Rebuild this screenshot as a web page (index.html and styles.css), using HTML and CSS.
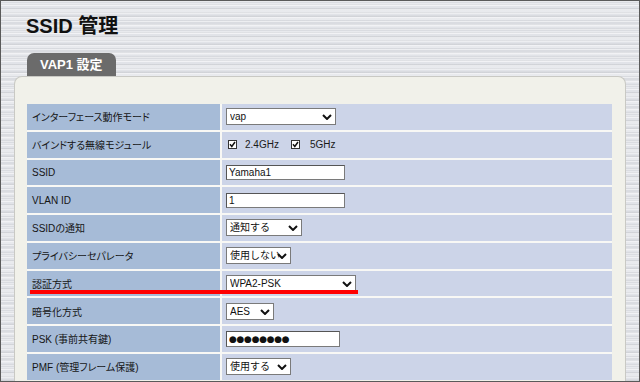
FILE: index.html
```html
<!DOCTYPE html>
<html>
	<head>
		<meta charset="utf-8">
		<link rel="stylesheet" href="styles.css">
	</head>
	<body>
		<div class="screen">
			<h1 class="page-title">SSID 管理</h1>
			<div class="tab">VAP1 設定</div>

			<section class="panel">
				<div class="settings">
					<div class="label">インターフェース動作モード</div>
					<div class="value">
						<span class="select w110"><select><option>vap</option></select><svg class="chev" width="10" height="6" viewBox="0 0 10 6"><path d="M1 1l4 4 4-4" fill="none" stroke="#111" stroke-width="2"/></svg></span>
					</div>

					<div class="label">バインドする無線モジュール</div>
					<div class="value">
						<span class="check"><svg width="9" height="9" viewBox="0 0 9 9"><rect x="0.5" y="0.5" width="8" height="8" fill="#fff" stroke="#333"/><path d="M2 4.3l1.8 2.2L7 2" fill="none" stroke="#111" stroke-width="1.5"/></svg>2.4GHz</span>
						<span class="check"><svg width="9" height="9" viewBox="0 0 9 9"><rect x="0.5" y="0.5" width="8" height="8" fill="#fff" stroke="#333"/><path d="M2 4.3l1.8 2.2L7 2" fill="none" stroke="#111" stroke-width="1.5"/></svg>5GHz</span>
					</div>

					<div class="label">SSID</div>
					<div class="value"><input class="text w119" type="text" value="Yamaha1"></div>

					<div class="label">VLAN ID</div>
					<div class="value"><input class="text w119" type="text" value="1"></div>

					<div class="label">SSIDの通知</div>
					<div class="value">
						<span class="select w76"><select><option>通知する</option></select><svg class="chev" width="10" height="6" viewBox="0 0 10 6"><path d="M1 1l4 4 4-4" fill="none" stroke="#111" stroke-width="2"/></svg></span>
					</div>

					<div class="label">プライバシーセパレータ</div>
					<div class="value">
						<span class="select w65"><select><option>使用しない</option></select><svg class="chev" width="10" height="6" viewBox="0 0 10 6"><path d="M1 1l4 4 4-4" fill="none" stroke="#111" stroke-width="2"/></svg></span>
					</div>

					<div class="label">認証方式</div>
					<div class="value">
						<span class="select w130"><select><option>WPA2-PSK</option></select><svg class="chev" width="10" height="6" viewBox="0 0 10 6"><path d="M1 1l4 4 4-4" fill="none" stroke="#111" stroke-width="2"/></svg></span>
					</div>

					<div class="label">暗号化方式</div>
					<div class="value">
						<span class="select w48"><select><option>AES</option></select><svg class="chev" width="10" height="6" viewBox="0 0 10 6"><path d="M1 1l4 4 4-4" fill="none" stroke="#111" stroke-width="2"/></svg></span>
					</div>

					<div class="label">PSK (事前共有鍵)</div>
					<div class="value"><input class="text secret w114" type="text" value="●●●●●●●●"></div>

					<div class="label">PMF (管理フレーム保護)</div>
					<div class="value">
						<span class="select w65"><select><option>使用する</option></select><svg class="chev" width="10" height="6" viewBox="0 0 10 6"><path d="M1 1l4 4 4-4" fill="none" stroke="#111" stroke-width="2"/></svg></span>
					</div>
				</div>

				<!-- annotation under 認証方式 -->
				<div class="mark"></div>
			</section>
		</div>
	</body>
</html>
```

FILE: styles.css
```css
html, body {
	margin: 0;
	padding: 0;
}

.screen {
	width: 640px;
	height: 382px;
	box-sizing: border-box;
	border: 1px solid #5a5a5a;
	overflow: hidden;
	font-family: "Liberation Sans", "Noto Sans CJK JP", sans-serif;
	color: #1a1a1a;
	background-color: #e1e3e8;
	background-image:
		repeating-linear-gradient(180deg, rgba(255,255,255,0.4) 0 1px, rgba(0,0,0,0) 1px 3px, rgba(0,0,0,0.04) 3px 4px),
		repeating-linear-gradient(180deg, rgba(0,0,0,0.03) 0 2px, rgba(255,255,255,0.25) 2px 5px, rgba(0,0,0,0) 5px 7px);
}

.page-title {
	margin: 13px 0 0 25px;
	font-size: 20px;
	line-height: 24px;
	font-weight: bold;
	color: #111;
}

.tab {
	display: inline-block;
	margin: 15px 0 0 26px;
	padding: 1px 13px 0 13px;
	width: 63px;
	height: 22px;
	line-height: 22px;
	font-size: 13px;
	font-weight: bold;
	color: #fff;
	background: #6b6b6b;
	border-radius: 7px 7px 0 0;
	vertical-align: top;
}

.panel {
	position: relative;
	margin-left: 13px;
	width: 612px;
	box-sizing: border-box;
	height: 320px;
	padding: 27px 13px 0 12px;
	background: #f1f1ea;
	border: 1px solid #c9c9c4;
	border-bottom: none;
	border-radius: 8px 8px 0 0;
}

/* two column setting table */
.settings {
	display: grid;
	grid-template-columns: 193px 1fr;
	grid-auto-rows: 25.75px;
	gap: 2px;
	background: #f8f8f5;
	font-size: 10px;
}

.label {
	display: flex;
	align-items: center;
	padding-left: 5px;
	background: #a6bbd7;
	font-feature-settings: "palt";
	color: #151515;
}

.value {
	display: flex;
	align-items: center;
	padding-left: 4px;
	background: #ccd4e8;
}

/* controls */
.select {
	position: relative;
	display: inline-block;
	height: 17px;
}
.select select {
	-webkit-appearance: none;
	        appearance: none;
	width: 100%;
	height: 17px;
	margin: 0;
	padding: 0 0 0 3px;
	border: 1px solid #7a7a7a;
	border-radius: 0;
	background: #fff;
	font-family: "Liberation Sans", "Noto Sans CJK JP", sans-serif;
	font-size: 10px;
	color: #111;
}
.select .chev {
	position: absolute;
	right: 4px;
	top: 6px;
	pointer-events: none;
}

.w48  { width: 48px; }
.w65  { width: 65px; }
.w76  { width: 76px; }
.w110 { width: 110px; }
.w114 { width: 114px; }
.w119 { width: 119px; }
.w130 { width: 130px; }

.text {
	box-sizing: border-box;
	height: 15px;
	margin: 0;
	padding: 0 2px;
	border: 1px solid #7a7a7a;
	border-top-color: #555;
	border-left-color: #555;
	border-radius: 0;
	background: #fff;
	font-family: "Liberation Sans", sans-serif;
	font-size: 10px;
	color: #111;
}
.text.secret {
	height: 16px;
	font-family: "DejaVu Sans", sans-serif;
	font-size: 9px;
	letter-spacing: -0.3px;
}

.check {
	display: inline-flex;
	align-items: center;
	gap: 8px;
	margin-left: 2px;
	margin-right: 12px;
}
.check + .check {
	margin-left: 0;
	gap: 10px;
}

.mark {
	position: absolute;
	left: 15px;
	top: 213px;
	width: 328px;
	height: 4px;
	background: #ff0000;
}
```
